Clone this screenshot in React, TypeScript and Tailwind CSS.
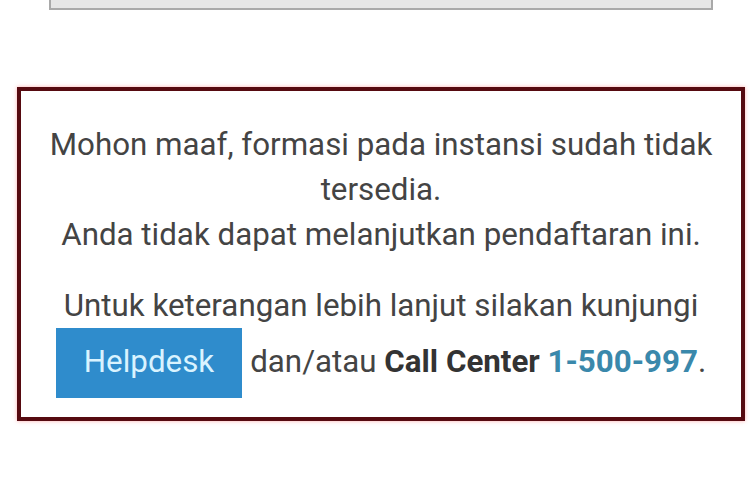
import React from 'react';

export default function App() {
  return (
    <div className="w-[750px] h-[500px] bg-white overflow-hidden font-['Roboto',sans-serif]">
      {/* input field cut off at the top */}
      <div className="ml-[49px] w-[664px] h-[10px] bg-[#e6e6e6] border-x-2 border-b-2 border-[#a9a9a9]" />

      {/* alert box */}
      <div className="ml-[17px] mt-[77px] w-[728px] h-[334px] border-4 border-[#560a10] bg-white shadow-[0_0_4px_rgba(255,110,110,0.55)] pt-[31px] text-center text-[31.3px] leading-[45px] text-[#444444]">
        <p>
          Mohon maaf, formasi pada instansi sudah tidak
          <br />
          tersedia.
          <br />
          Anda tidak dapat melanjutkan pendaftaran ini.
        </p>
        <div className="mt-[26px]">
          <p>Untuk keterangan lebih lanjut silakan kunjungi</p>
          <div className="flex items-baseline justify-center gap-[8px]">
            <span className="inline-block bg-[#2f8ccc] text-[#d9f3ff] px-[28px] pt-[11px] pb-[14px]">
              Helpdesk
            </span>
            <span>
              dan/atau <b className="font-bold text-[#333333]">Call Center</b>{' '}
              <b className="font-bold text-[#3a88ab]">1-500-997</b>.
            </span>
          </div>
        </div>
      </div>
    </div>
  );
}
